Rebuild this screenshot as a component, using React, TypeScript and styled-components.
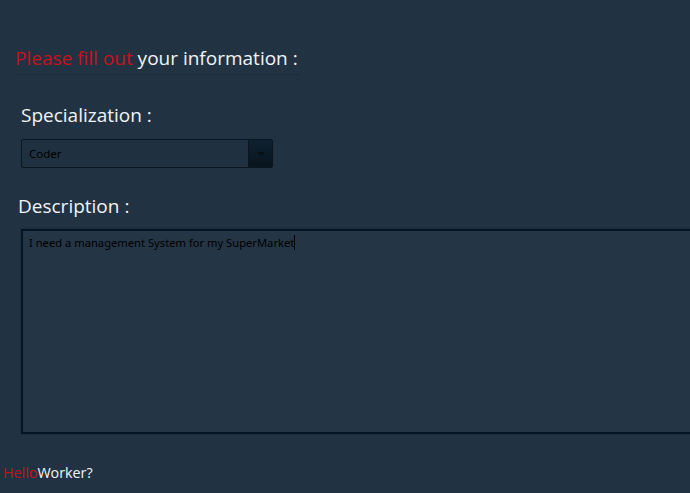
import React from 'react';
import styled, { createGlobalStyle } from 'styled-components';

const bg = '#213343';
const red = '#c8101c';
const light = '#f2f4f6';

const GlobalStyle = createGlobalStyle`
  html, body {
    margin: 0;
    padding: 0;
    background: ${bg};
    overflow: hidden;
  }
  body {
    font-family: "Open Sans", "Noto Sans", sans-serif;
  }
`;

export default function App() {
  return (
    <Page>
      <GlobalStyle />
      <Heading>
        <Red>Please fill out</Red> your information :
      </Heading>
      <Label>Specialization :</Label>
      <SelectBox>
        <SelectText>Coder</SelectText>
        <SelectArrow>
          <svg width="8" height="4" viewBox="0 0 8 4">
            <path d="M0 0 L8 0 L4 4 Z" fill="#0a0f14" />
          </svg>
        </SelectArrow>
      </SelectBox>
      <Label $indent={18} $top={24}>Description :</Label>
      <TextArea>
        I need a management System for my SuperMarket<Caret />
      </TextArea>
      <Footer>
        <Red>Hello</Red>Worker?
      </Footer>
    </Page>
  );
}

const Page = styled.div`
  height: 493px;
  width: 690px;
  display: flex;
  flex-direction: column;
  align-items: flex-start;
  padding-top: 44px;
  box-sizing: border-box;
`;

const Heading = styled.h2`
  margin: 0 0 0 14px;
  padding: 0 1px 2px;
  font-size: 19px;
  font-weight: 400;
  line-height: 28px;
  color: ${light};
  border-bottom: 1px solid #1b2c3b;
`;

const Red = styled.span`
  color: ${red};
`;

const Label = styled.div<{ $indent?: number; $top?: number }>`
  margin-left: ${p => p.$indent ?? 21}px;
  margin-top: ${p => p.$top ?? 26}px;
  font-size: 19px;
  line-height: 28px;
  color: ${light};
`;

const SelectBox = styled.div`
  margin: 10px 0 0 21px;
  width: 252px;
  height: 29px;
  box-sizing: border-box;
  border: 1px solid #0b1620;
  border-radius: 2px;
  background: #1f3141;
  display: flex;
  align-items: stretch;
`;

const SelectText = styled.div`
  flex: 1;
  padding-left: 7px;
  font-family: "Noto Sans", sans-serif;
  font-size: 11.5px;
  display: flex;
  align-items: center;
  color: #000;
`;

const SelectArrow = styled.div`
  width: 23px;
  background: linear-gradient(#0f2130, #08141e);
  border-left: 1px solid #0b1620;
  display: flex;
  align-items: center;
  justify-content: center;
`;

const TextArea = styled.div`
  margin: 9px 0 0 21px;
  width: 700px;
  height: 205px;
  box-sizing: border-box;
  border: 2px solid #051526;
  box-shadow: 0 0 0 1px #1a3040;
  background: #243545;
  padding: 3px 6px;
  font-family: "Noto Sans", sans-serif;
  font-size: 11.2px;
  line-height: 17px;
  color: #000;
`;

const Caret = styled.span`
  display: inline-block;
  width: 1px;
  height: 15px;
  background: #000;
  vertical-align: -3px;
`;

const Footer = styled.div`
  margin: 29px 0 0 3px;
  font-size: 14.3px;
  color: ${light};
`;
